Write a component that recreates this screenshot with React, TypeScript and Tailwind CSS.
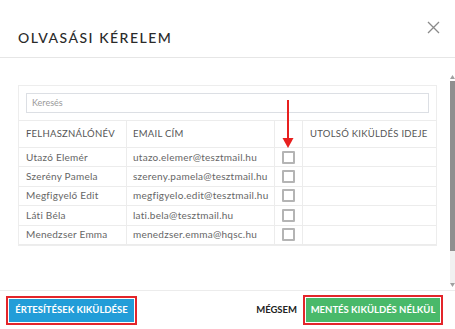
// Read-request modal: user list with checkbox column, footer actions.

const USERS = [
  { name: "Utazó Elemér", email: "utazo.elemer@tesztmail.hu" },
  { name: "Szerény Pamela", email: "szereny.pamela@tesztmail.hu" },
  { name: "Megfigyelő Edit", email: "megfigyelo.edit@tesztmail.hu" },
  { name: "Láti Béla", email: "lati.bela@tesztmail.hu" },
  { name: "Menedzser Emma", email: "menedzser.emma@hqsc.hu" },
];

const COLS = "grid grid-cols-[107px_148px_28px_1fr]";

function Row({ name, email }: { name: string; email: string }) {
  return (
    <div className={`${COLS} h-[19.4px] border-b border-[#ececec] text-[10px] tracking-[0.25px] text-[#666]`}>
      <div className="flex items-center pl-[7px]">{name}</div>
      <div className="flex items-center border-l border-[#ececec] pl-[6px]">{email}</div>
      <div className="flex items-center justify-center border-l border-[#ececec]">
        <span className="block h-[13px] w-[13px] rounded-[1px] border-2 border-[#b4b4b4] bg-white" />
      </div>
      <div className="border-l border-[#ececec]" />
    </div>
  );
}

function Scrollbar() {
  return (
    <div className="mt-[16px] mb-[2px] flex w-[5px] flex-col items-center">
      <svg width="5" height="5" viewBox="0 0 5 5" className="shrink-0">
        <path d="M0 5 L2.5 1 L5 5 Z" fill="#a0a0a0" />
      </svg>
      <div className="mt-[2px] flex w-full flex-1 flex-col bg-[#f1f1f1]">
        <div className="h-[170px] w-full bg-[#8f8f8f]" />
      </div>
      <svg width="5" height="5" viewBox="0 0 5 5" className="shrink-0">
        <path d="M0 0 L2.5 4 L5 0 Z" fill="#a0a0a0" />
      </svg>
    </div>
  );
}

export default function App() {
  return (
    <div
      className="flex h-[329px] w-[455px] flex-col overflow-hidden bg-white"
      style={{ fontFamily: "Lato, 'Open Sans', sans-serif" }}
    >
      <div className="flex h-[58px] shrink-0 items-start justify-between border-b border-[#e6e6e6] pl-[18px] pr-[15px]">
        <h1 className="mt-[27px] text-[14px] font-medium tracking-[1.5px] text-[#2a2a2a]">OLVASÁSI KÉRELEM</h1>
        <svg width="13" height="13" viewBox="0 0 13 13" className="mt-[21px]">
          <path d="M1 1 L12 12 M12 1 L1 12" stroke="#8a8a8a" strokeWidth="1.3" />
        </svg>
      </div>

      <div className="flex min-h-0 flex-1">
        <div className="flex-1 pl-[18px] pr-[13px] pt-[27px]">
          <div className="relative border border-[#ededed]">
            <div className="p-[7px]">
              <div className="flex h-[20px] items-center border border-[#dcdfe4] pl-[5px] text-[9px] text-[#9a9a9a]">
                Keresés
              </div>
            </div>
            <div className={`${COLS} h-[28px] whitespace-nowrap border-y border-[#ececec] text-[9.5px] tracking-[0.25px] text-[#555]`}>
              <div className="flex items-center pl-[7px]">FELHASZNÁLÓNÉV</div>
              <div className="flex items-center border-l border-[#ececec] pl-[6px]">EMAIL CÍM</div>
              <div className="border-l border-[#ececec]" />
              <div className="flex items-center border-l border-[#ececec] pl-[7px]">UTOLSÓ KIKÜLDÉS IDEJE</div>
            </div>
            {USERS.map((u) => (
              <Row key={u.email} name={u.name} email={u.email} />
            ))}

            <svg width="12" height="49" viewBox="0 0 12 49" className="absolute left-[263px] top-[14px]">
              <path d="M6 0 V40" stroke="#e8201f" strokeWidth="2" />
              <path d="M0.5 38 L11.5 38 L6 48 Z" fill="#e8201f" />
            </svg>
          </div>
        </div>
        <Scrollbar />
      </div>

      <div className="flex h-[39px] shrink-0 items-center justify-between border-t border-[#ececec] pl-[6px] pr-[12px]">
        <div className="mt-[1px] border-2 border-[#e3252a] p-px">
          <button className="flex h-[23px] w-[125px] items-center justify-center bg-[#229dd8] text-[9.5px] font-bold text-white">
            ÉRTESÍTÉSEK KIKÜLDÉSE
          </button>
        </div>
        <div className="flex items-center gap-[6px]">
          <span className="text-[9.5px] font-bold text-[#222]">MÉGSEM</span>
          <div className="border-2 border-[#e3252a] p-px">
            <button className="flex h-[24px] w-[134px] items-center justify-center bg-[#49b96a] text-[9.5px] font-bold text-white">
              MENTÉS KIKÜLDÉS NÉLKÜL
            </button>
          </div>
        </div>
      </div>
    </div>
  );
}
